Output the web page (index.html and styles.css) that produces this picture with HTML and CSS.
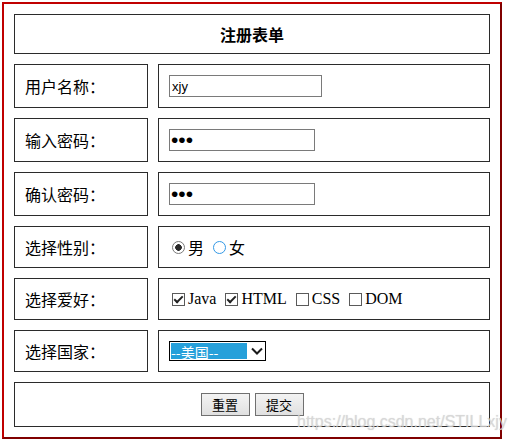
FILE: index.html
```html
<!DOCTYPE html>
<html lang="zh-CN">
<head>
<meta charset="utf-8">
<title>注册表单</title>
<link rel="stylesheet" href="styles.css">
</head>
<body>
<form class="form">
  <div class="cell title">注册表单</div>

  <div class="cell label">用户名称：</div>
  <div class="cell field"><input class="text" type="text" value="xjy"></div>

  <div class="cell label">输入密码：</div>
  <div class="cell field"><input class="text pw" type="password" value="123"></div>

  <div class="cell label">确认密码：</div>
  <div class="cell field"><input class="text pw" type="password" value="123"></div>

  <div class="cell label">选择性别：</div>
  <div class="cell field choices">
    <label class="opt"><input type="radio" name="sex" checked>男</label>
    <label class="opt"><input class="hot" type="radio" name="sex">女</label>
  </div>

  <div class="cell label">选择爱好：</div>
  <div class="cell field choices">
    <label class="opt"><input type="checkbox" checked>Java</label>
    <label class="opt"><input type="checkbox" checked>HTML</label>
    <label class="opt"><input type="checkbox">CSS</label>
    <label class="opt"><input type="checkbox">DOM</label>
  </div>

  <div class="cell label">选择国家：</div>
  <div class="cell field">
    <span class="select-wrap">
      <select class="country">
        <option>--美国--</option>
        <option>--中国--</option>
        <option>--日本--</option>
      </select>
      <svg class="chev" width="12" height="8" viewBox="0 0 12 8"><path d="M1 1.5l5 5 5-5" fill="none" stroke="#1a1a1a" stroke-width="2"/></svg>
    </span>
  </div>

  <div class="cell actions">
    <button class="btn" type="reset">重置</button>
    <button class="btn" type="submit">提交</button>
  </div>
</form>
<div class="watermark">https://blog.csdn.net/STILLxjy</div>
</body>
</html>
```
FILE: styles.css
```css
html, body {
  margin: 0;
  padding: 0;
  background: #fff;
}
body {
  font: 16px "Liberation Serif", "Noto Sans CJK SC", serif;
  color: #000;
  position: relative;
  width: 514px;
  height: 443px;
  overflow: hidden;
}
.form {
  margin: 2px;
  width: 500px;
  box-sizing: border-box;
  border: 2px solid;
  border-color: #c00000 #800000 #800000 #c00000;
  padding: 10px;
  display: grid;
  grid-template-columns: 134px 332px;
  grid-template-rows: 40px 44px 44px 44px 42px 42px 42px 45px;
  gap: 10px;
}
.cell {
  border: 1px solid #2b2b2b;
  display: flex;
  align-items: center;
  box-sizing: border-box;
}
.title {
  grid-column: 1 / -1;
  justify-content: center;
  font-weight: bold;
  font-family: "Noto Sans CJK SC", sans-serif;
}
.label {
  padding-left: 10px;
  font-family: "Noto Sans CJK SC", sans-serif;
}
.field {
  padding-left: 10px;
}
.text {
  box-sizing: border-box;
  width: 153px;
  height: 22px;
  margin: 0;
  border: 1px solid #7a7a7a;
  padding: 0 2px;
  font: 13px "Liberation Sans", sans-serif;
  color: #000;
  outline: none;
}
.pw {
  width: 146px;
  font-size: 21px;
  padding: 0 1px;
}
.choices {
  padding-left: 13px;
  font-family: "Liberation Serif", "Noto Sans CJK SC", serif;
}
.opt {
  display: inline-flex;
  align-items: center;
  margin-right: 9px;
}
.opt input {
  margin: 0 3px 0 0;
}
input[type=radio] {
  appearance: none;
  -webkit-appearance: none;
  width: 13px;
  height: 13px;
  border: 1px solid #7a7a7a;
  border-radius: 50%;
  background: #fff;
  box-sizing: border-box;
}
input[type=radio]:checked {
  background: radial-gradient(circle, #2a2a2a 0 3px, #fff 3.6px);
}
input[type=radio].hot {
  border: 1.5px solid #3399e6;
}
input[type=checkbox] {
  appearance: none;
  -webkit-appearance: none;
  width: 13px;
  height: 13px;
  border: 1px solid #5a5a5a;
  background: #fff;
  box-sizing: border-box;
  position: relative;
}
input[type=checkbox]:checked::after {
  content: "";
  position: absolute;
  left: 3px;
  top: 0px;
  width: 3px;
  height: 7px;
  border: solid #222;
  border-width: 0 2px 2px 0;
  transform: rotate(45deg);
}
.select-wrap {
  position: relative;
  display: inline-block;
  height: 20px;
}
.country {
  appearance: none;
  -webkit-appearance: none;
  box-sizing: border-box;
  width: 97px;
  height: 20px;
  margin: 0;
  border: 1px solid #000;
  border-radius: 0;
  padding: 0 0 0 1px;
  font: 14px "Noto Sans CJK SC", sans-serif;
  color: #fff;
  background: linear-gradient(#26a0da, #26a0da) 1px 1px / 76px 16px no-repeat, #fff;
  outline: none;
}
.chev {
  position: absolute;
  right: 3px;
  top: 6px;
  pointer-events: none;
}
.actions {
  grid-column: 1 / -1;
  justify-content: center;
  gap: 5px;
}
.btn {
  box-sizing: border-box;
  width: 49px;
  height: 23px;
  margin: 0;
  padding: 0;
  border: 1px solid #707070;
  border-radius: 0;
  background: linear-gradient(#f3f3f3, #e0e0e0);
  font: 13px "Noto Sans CJK SC", sans-serif;
  color: #000;
}
.watermark {
  position: absolute;
  left: 297px;
  top: 413px;
  font: 16px "Liberation Sans", sans-serif;
  color: rgba(215, 215, 215, 0.8);
  text-shadow: 0 0 1px rgba(150, 150, 150, 0.4);
  pointer-events: none;
  white-space: nowrap;
}
```
